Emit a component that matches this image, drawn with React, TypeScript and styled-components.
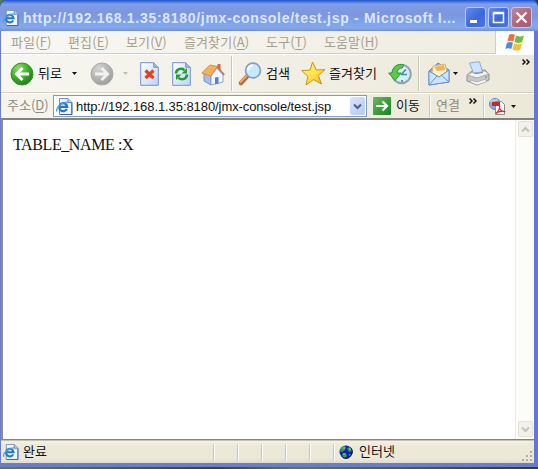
import React from "react";
import styled, { createGlobalStyle } from "styled-components";

const GlobalStyle = createGlobalStyle`
  * { box-sizing: border-box; }
  body { margin: 0; overflow: hidden; background: #45663d; }
  svg { display: block; flex: none; }
`;

const ui = `"Liberation Sans", "Noto Sans CJK KR", sans-serif`;

const Desktop = styled.div`
  width: 538px;
  height: 469px;
  padding-top: 1px;
  background: linear-gradient(90deg, #5a8046, #34482f 40%, #5c7b48 55%, #2c3d35);
`;

const Window = styled.div`
  width: 538px;
  height: 466px;
  display: flex;
  flex-direction: column;
  border: solid #6b7ccb;
  border-width: 0 4px 4px 1px;
  border-right-color: #6575d8;
  border-radius: 7px 7px 0 0;
  background: #ece9d8;
  font-family: ${ui};
  box-shadow: 0 -2px 0 #2a5bd2;
`;

const TitleBar = styled.div`
  height: 30px;
  flex: none;
  margin: 0 -4px 0 -1px;
  padding: 3px 6px 0 3px;
  display: flex;
  align-items: center;
  border-radius: 7px 7px 0 0;
  background: linear-gradient(#3767da 0, #7fa0ea 3px, #8199e3 6px, #7b96df 14px, #7ea4ea 22px, #83a8ed 27px, #6f8de0 30px);
`;

const Label = styled.span<{ $w: number; $color?: string; $space?: number; $shift?: number }>`
  display: block;
  flex: none;
  width: ${(p) => p.$w}px;
  margin-top: ${(p) => p.$shift ?? 0}px;
  white-space: pre;
  color: ${(p) => p.$color ?? "#111"};
  font-family: "Noto Sans CJK KR", sans-serif;
  font-size: 13px;
  line-height: 16px;
  letter-spacing: ${(p) => p.$space ?? 0}px;
`;

const Title = styled.div`
  flex: 1;
  margin-left: 4px;
  color: #dce7ff;
  font: bold 14px/18px ${ui};
  letter-spacing: 0.7px;
  white-space: pre;
`;

const CaptionButton = styled.div<{ $close?: boolean }>`
  width: 21px;
  height: 21px;
  flex: none;
  margin-left: 2px;
  border: 1px solid #b8caf5;
  border-radius: 3px;
  background: ${(p) => (p.$close ? "linear-gradient(135deg, #bd8798, #ad6476 60%, #a45f7c)" : "linear-gradient(135deg, #638af0, #3d68dc 55%, #4875e4)")};
`;

const MenuBar = styled.div`
  height: 23px;
  flex: none;
  display: flex;
  padding-left: 10px;
  align-items: center;
  border-bottom: 1px solid #d3cfbd;
  background: linear-gradient(90deg, #f8f7f3, #efecdf);
`;

const MenuLabel = styled(Label)`
  u { text-decoration-thickness: 1px; text-underline-offset: 2px; }
`;

const Throbber = styled.div`
  width: 39px;
  height: 23px;
  margin-left: auto;
  display: flex;
  justify-content: center;
  align-items: center;
  border-left: 1px solid #d3cfbd;
  background: #fff;
`;

const ToolBar = styled.div`
  height: 39px;
  flex: none;
  display: flex;
  align-items: center;
  border-top: 1px solid #fff;
  border-bottom: 1px solid #d6d2c1;
  background: linear-gradient(90deg, #f7f6f1, #ece9da);
`;

const Gap = styled.div<{ $w: number }>`
  flex: none;
  width: ${(p) => p.$w}px;
`;

const Divider = styled.div<{ $h: number }>`
  flex: none;
  width: 2px;
  height: ${(p) => p.$h}px;
  border-left: 1px solid #cbc7b5;
  border-right: 1px solid #fff;
`;

const Overflow = styled.div<{ $top: number }>`
  align-self: flex-start;
  flex: none;
  width: 8px;
  margin-top: ${(p) => p.$top}px;
`;

const AddressBar = styled.div`
  height: 25px;
  flex: none;
  display: flex;
  align-items: center;
  border-top: 1px solid #fff;
  background: linear-gradient(90deg, #f5f4ee, #ece9d8);
`;

const AddressField = styled.div`
  width: 314px;
  height: 22px;
  flex: none;
  display: flex;
  align-items: center;
  padding-left: 2px;
  border: 1px solid #7f9db9;
  background: #fff;
`;

const Url = styled.div`
  flex: 1;
  margin-left: 3px;
  padding-top: 2px;
  color: #111;
  font: 13px/16px ${ui};
  letter-spacing: -0.08px;
  white-space: pre;
`;

const DropButton = styled.div`
  width: 15px;
  height: 18px;
  margin-right: 1px;
  display: flex;
  align-items: center;
  justify-content: center;
  border-radius: 2px;
  background: linear-gradient(135deg, #dbe5fd, #b4c9f4);
`;

const Viewport = styled.div`
  flex: 1;
  min-height: 0;
  display: flex;
  border: solid #85837a;
  border-width: 2px 0 1px 2px;
  border-left-color: #8b8d95;
  background: #fff;
`;

const Page = styled.div`
  flex: 1;
  padding: 16px 10px;
  color: #111;
  font: 16px/18px "Liberation Serif", serif;
  letter-spacing: -0.4px;
`;

const ScrollTrack = styled.div`
  width: 19px;
  display: flex;
  flex-direction: column;
  justify-content: space-between;
  align-items: center;
  padding: 1px 0 2px;
  border-left: 1px solid #eeede5;
  background: #fcfcf9;
`;

const ScrollButton = styled.div`
  width: 15px;
  height: 16px;
  display: flex;
  justify-content: center;
  align-items: center;
  border: 1px solid #e2e0d7;
  border-radius: 2px;
  background: #f2f1eb;
`;

const StatusBar = styled.div`
  height: 23px;
  flex: none;
  display: flex;
  align-items: center;
  border-top: 1px solid #c5c2b4;
  background: linear-gradient(#f3f1e7, #ece9d8 5px, #ebe8d7 18px, #dedbd0);
`;

const Grip = styled.div`
  margin: auto 1px 1px auto;
`;

const IePage = ({ size = 17 }: { size?: number }) => (
  <svg width={size} height={size} viewBox="0 0 17 17">
    <path d="M3.500.5H12l4 4v12H3.500z" fill="#eef4ff" stroke="#7a8fc4" />
    <path d="M15.800 5v11.500H4" fill="none" stroke="#475c96" />
    <path d="M12 .5v4h4" fill="#bacdf5" stroke="#6f85bd" />
    <path d="M10.800 11A4 4 0 1 1 11.200 8.800H3.800" fill="none" stroke="#2477c8" strokeWidth="2.200" />
    <path d="M1 13.500C-1 10 7 3 12.500 4.200" fill="none" stroke="#4aa3e0" strokeWidth="1.300" />
  </svg>
);

const Caret = ({ color = "#111" }: { color?: string }) => (
  <svg width="5" height="3" viewBox="0 0 5 3"><path d="M0 0h5L2.500 3z" fill={color} /></svg>
);

const Chevrons = () => (
  <svg width="8" height="6" viewBox="0 0 8 6"><path d="M.5.5 3 3 .5 5.500M4.500.5 7 3 4.500 5.500" fill="none" stroke="#111" strokeWidth="1.500" /></svg>
);

const ScrollArrow = ({ up }: { up?: boolean }) => (
  <svg width="9" height="7" viewBox="0 0 9 7"><path d={up ? "M1 5.500 4.500 2 8 5.500" : "M1 1.500 4.500 5 8 1.500"} fill="none" stroke="#c6c4b8" strokeWidth="2.200" /></svg>
);

const NavCircle = ({ forward }: { forward?: boolean }) => (
  <svg width="24" height="24" viewBox="0 0 24 24">
    <defs>
      <radialGradient id={forward ? "fwd" : "back"} cx=".35" cy=".25" r=".8">
        <stop stopColor={forward ? "#d4d4d2" : "#8de067"} />
        <stop offset=".55" stopColor={forward ? "#b5b5b3" : "#3dad28"} />
        <stop offset="1" stopColor={forward ? "#9c9c9a" : "#1e7d17"} />
      </radialGradient>
    </defs>
    <circle cx="12" cy="12" r="11" fill={`url(#${forward ? "fwd" : "back"})`} stroke={forward ? "#aaa" : "#3c8e30"} />
    <path d={forward ? "M5 12h12M11.500 6l6 6-6 6" : "M19 12H7M12.500 6l-6 6 6 6"} fill="none" stroke={forward ? "#f1f1ef" : "#fff"} strokeWidth="3" />
  </svg>
);

const Sheet = ({ refresh }: { refresh?: boolean }) => (
  <svg width="19" height="24" viewBox="0 0 19 24">
    <defs><linearGradient id="sheet" x2="1" y2="1"><stop stopColor="#fff" /><stop offset="1" stopColor="#bdd2fa" /></linearGradient></defs>
    <path d="M.7.7h13l4.600 4.600v18H.7z" fill="url(#sheet)" stroke="#7892ca" />
    <path d="M13.700.7v4.600h4.600" fill="#9fbbed" stroke="#7892ca" />
    {refresh ? (
      <g fill="none" stroke="#259b31" strokeWidth="2.600">
        <path d="M4 11.500c.3-4.500 5-6 8.500-3.500M15 12.500c-.3 4.500-5 6-8.500 3.500" />
        <path d="M15 6v5.500H9.500zM4 18v-5.500h5.500z" fill="#259b31" stroke="none" />
      </g>
    ) : (
      <path d="m5.500 8.500 8 7.500m0-7.500-8 7.500" stroke="#e6401c" strokeWidth="3.200" />
    )}
  </svg>
);

const Home = () => (
  <svg width="24" height="24" viewBox="0 0 24 24">
    <path d="M16.500 2h3v7h-3z" fill="#d56843" />
    <path d="m3 11 7 3v9l-7-4z" fill="#a8bce8" stroke="#7890c5" />
    <path d="m10 14 6-8 6 7v7l-12 3z" fill="#f2f6ff" stroke="#8ba3d4" />
    <path d="m.8 11 8-8L16.500 4.500 9.500 14z" fill="#f7b05b" stroke="#e08a3e" />
    <path d="m16 4.500 7.300 8.500" stroke="#b7795d" strokeWidth="1.600" />
    <path d="M14 15.500 17.500 15v6.500l-3.500.8z" fill="#5381cb" />
  </svg>
);

const Search = () => (
  <svg width="24" height="24" viewBox="0 0 24 24">
    <path d="m3 21 6-6.500" stroke="#b3683c" strokeWidth="4.500" strokeLinecap="round" />
    <path d="m2.500 20 6-6" stroke="#eeaa70" strokeWidth="1.800" strokeLinecap="round" />
    <circle cx="15" cy="8.500" r="7.400" fill="#c4ebff" stroke="#7f9fc9" strokeWidth="1.700" />
    <path d="M10 8.500a5 5 0 0 1 5-5" fill="none" stroke="#fff" strokeWidth="2.500" />
  </svg>
);

const Star = () => (
  <svg width="25" height="25" viewBox="0 0 25 25">
    <defs><linearGradient id="star" x2="1" y2="1"><stop stopColor="#fffbb4" /><stop offset=".55" stopColor="#ffe044" /><stop offset="1" stopColor="#e9a817" /></linearGradient></defs>
    <path d="m11.500 1 3.700 8 8.800-.4-6.600 6 3.100 8.400-8-4.400-7.500 5.400 1.900-8.600L.8 9.600l8.400-.5z" fill="url(#star)" stroke="#c99316" strokeLinejoin="round" />
  </svg>
);

const History = () => (
  <svg width="24" height="24" viewBox="0 0 24 24">
    <circle cx="13.500" cy="12" r="9.300" fill="#d6edf9" stroke="#8da3b4" strokeWidth="2" />
    <path d="m13 12.500 5-5M13 12.500h6M14 4v2m0 12v2" stroke="#4f86ad" strokeWidth="1.700" />
    <path d="M16 3C9.500.8 4.500 5 4 11H.7l6.300 7.500 6-7.500H9c0-3 2.500-5 5-5z" fill="#5cc84c" stroke="#2d982a" />
  </svg>
);

const Mail = () => (
  <svg width="22" height="24" viewBox="0 0 22 24">
    <path d="M1 9 10 1l11 7v12L1 23z" fill="#8aadea" stroke="#5a83cb" />
    <path d="m5 4 12-2 2 8-8 5-7-4z" fill="#fff3cd" stroke="#d3b27c" />
    <path d="m6 5 10-2 1 5-8 1z" fill="#f6b24d" />
    <path d="m1 9 10 6 10-7v12L1 23z" fill="#c8e6ff" stroke="#6b91d1" />
    <path d="m1 23 8-9m12 6-8-7" stroke="#6b91d1" />
  </svg>
);

const Printer = () => (
  <svg width="24" height="25" viewBox="0 0 24 25">
    <path d="m1 14 5-4 13-1 4 4v6l-12 5-10-4z" fill="#c7c8ca" stroke="#8c8e92" />
    <path d="m1 14 10 3 12-4-4-3-12 1z" fill="#f2f2f0" stroke="#aaa" />
    <path d="m7 11 9-1 1 2-8 1z" fill="#73777c" />
    <path d="m3.500 2 10-1.300L16.500 11l-9 1z" fill="#cce5ff" stroke="#8ba8d6" />
    <path d="m4 19 7 2 9-3v3l-9 3-7-3z" fill="#f8f8f8" stroke="#999" strokeWidth=".6" />
    <path d="M19 16h2" stroke="#6cb859" strokeWidth="1.500" />
  </svg>
);

const Windows = () => (
  <svg width="20" height="19" viewBox="0 0 20 19">
    <path d="M4 2q3-2 6 0L8.400 8.500q-3-1.700-6 0z" fill="#ec7040" />
    <path d="M11 2.500q4 1.800 8 .2L17 9.300q-4 1.300-7.500-.3z" fill="#77bb47" />
    <path d="M2 9.800q3-1.700 6 0L6.300 16q-3-1.700-6 0z" fill="#4b8ddd" />
    <path d="M9 10.200q4 1.800 8 .2L15.200 17q-4 1.300-7.700-.3z" fill="#f4c13a" />
  </svg>
);

const Go = () => (
  <svg width="18" height="18" viewBox="0 0 18 18">
    <defs><linearGradient id="go" x2="1" y2="1"><stop stopColor="#67ba5e" /><stop offset="1" stopColor="#168421" /></linearGradient></defs>
    <rect width="18" height="18" rx="1" fill="url(#go)" />
    <path d="M3 9h11M9.500 4.500 14 9l-4.500 4.500" fill="none" stroke="#fff" strokeWidth="2.200" />
  </svg>
);

const Pdf = () => (
  <svg width="17" height="17" viewBox="0 0 17 17">
    <circle cx="6" cy="6" r="5.500" fill="#7db3dc" stroke="#6688a8" />
    <path d="M1.500 4c3-4 4 0 7-2.500" fill="none" stroke="#b5d6ea" strokeWidth="2" />
    <path d="M6.500 3.500h6l3 3v10h-9z" fill="#fff" stroke="#8a8a8a" />
    <path d="M3 4h8v4H3z" fill="#c9252d" />
    <path d="M7 15.500c4-3 4-8 3.500-7-.5 2 2.500 6 5 5-2-1-6 0-8.500 2z" fill="none" stroke="#d42b2b" strokeWidth="1.200" />
  </svg>
);

const Globe = () => (
  <svg width="14" height="14" viewBox="0 0 14 14">
    <circle cx="7" cy="7" r="6.500" fill="#151fb0" />
    <path d="M2 3 5 1l2 1-1 3-3 2-2-1zM8 3l3-1 2 4-3 1zM3 9l4-1 1 3-2 2-2-1zM10 9l2 0-2 3z" fill="#2fa047" />
    <path d="M4 3h2M4 9h2M10 4h2" stroke="#9ce6a0" />
    <path d="M11.500 2.500a6.500 6.500 0 0 1-8 10" fill="none" stroke="#071039" />
  </svg>
);

const menus = [
  { text: "파일", key: "F", width: 57 },
  { text: "편집", key: "E", width: 58 },
  { text: "보기", key: "V", width: 58 },
  { text: "즐겨찾기", key: "A", width: 82 },
  { text: "도구", key: "T", width: 58 },
  { text: "도움말", key: "H", width: 70 },
];

export default function App() {
  return (
    <>
      <GlobalStyle />
      <Desktop>
        <Window>
          <TitleBar>
            <IePage size={16} />
            <Title>http://192.168.1.35:8180/jmx-console/test.jsp - Microsoft I...</Title>
            <CaptionButton><svg width="19" height="19"><path d="M4 12h7v3H4z" fill="#fff" /></svg></CaptionButton>
            <CaptionButton><svg width="19" height="19"><path d="M4.500 4.500h10v10h-10zM4 5.500h11" fill="none" stroke="#fff" strokeWidth="1.500" /></svg></CaptionButton>
            <CaptionButton $close><svg width="19" height="19"><path d="m4.500 4.500 10 10m0-10-10 10" stroke="#fff" strokeWidth="2.200" /></svg></CaptionButton>
          </TitleBar>
          <MenuBar>
            {menus.map((m) => (
              <MenuLabel key={m.key} $w={m.width} $color="#a5a191" $space={0.1} $shift={-1}>{m.text}(<u>{m.key}</u>)</MenuLabel>
            ))}
            <Throbber><Windows /></Throbber>
          </MenuBar>
          <ToolBar>
            <Gap $w={9} /><NavCircle />
            <Gap $w={4} /><Label $w={24} $shift={-2}>뒤로</Label>
            <Gap $w={10} /><Caret />
            <Gap $w={13} /><NavCircle forward />
            <Gap $w={9} /><Caret color="#bfbcb0" />
            <Gap $w={12} /><Sheet />
            <Gap $w={13} /><Sheet refresh />
            <Gap $w={10} /><Home />
            <Gap $w={6} /><Divider $h={35} />
            <Gap $w={5} /><Search />
            <Gap $w={4} /><Label $w={24} $shift={-2}>검색</Label>
            <Gap $w={11} /><Star />
            <Gap $w={3} /><Label $w={50} $shift={-2}>즐겨찾기</Label>
            <Gap $w={9} /><History />
            <Gap $w={6} /><Divider $h={35} />
            <Gap $w={8} /><Mail />
            <Gap $w={3} /><Caret />
            <Gap $w={8} /><Printer />
            <Gap $w={32} /><Overflow $top={4}><Chevrons /></Overflow>
          </ToolBar>
          <AddressBar>
            <Gap $w={6} /><MenuLabel $w={46} $color="#8e8b80" $shift={-2}>주소(<u>D</u>)</MenuLabel>
            <AddressField>
              <IePage />
              <Url>http://192.168.1.35:8180/jmx-console/test.jsp</Url>
              <DropButton><svg width="9" height="7"><path d="m1 1.500 3.500 3.500L8 1.500" fill="none" stroke="#4d6185" strokeWidth="2" /></svg></DropButton>
            </AddressField>
            <Gap $w={6} /><Go />
            <Gap $w={5} /><Label $w={33} $shift={-2}>이동</Label>
            <Divider $h={22} />
            <Gap $w={5} /><Label $w={33} $color="#8e8b80" $shift={-2}>연결</Label>
            <Overflow $top={4}><Chevrons /></Overflow>
            <Gap $w={6} /><Divider $h={22} />
            <Gap $w={4} /><Pdf />
            <Gap $w={5} /><Caret />
          </AddressBar>
          <Viewport>
            <Page>TABLE_NAME :X</Page>
            <ScrollTrack>
              <ScrollButton><ScrollArrow up /></ScrollButton>
              <ScrollButton><ScrollArrow /></ScrollButton>
            </ScrollTrack>
          </Viewport>
          <StatusBar>
            <Gap $w={2} /><IePage size={16} />
            <Gap $w={4} /><Label $w={24} $shift={-2}>완료</Label>
            <Gap $w={166} />
            {[0, 1, 2, 3, 4].map((n) => (
              <React.Fragment key={n}><Divider $h={17} /><Gap $w={22} /></React.Fragment>
            ))}
            <Divider $h={17} />
            <Gap $w={4} /><Globe />
            <Gap $w={6} /><Label $w={36} $shift={-2}>인터넷</Label>
            <Grip>
              <svg width="12" height="12"><path d="M9 1h2v2H9zM5 5h2v2H5zM9 5h2v2H9zM1 9h2v2H1zM5 9h2v2H5zM9 9h2v2H9z" fill="#b3af9f" /></svg>
            </Grip>
          </StatusBar>
        </Window>
      </Desktop>
    </>
  );
}
